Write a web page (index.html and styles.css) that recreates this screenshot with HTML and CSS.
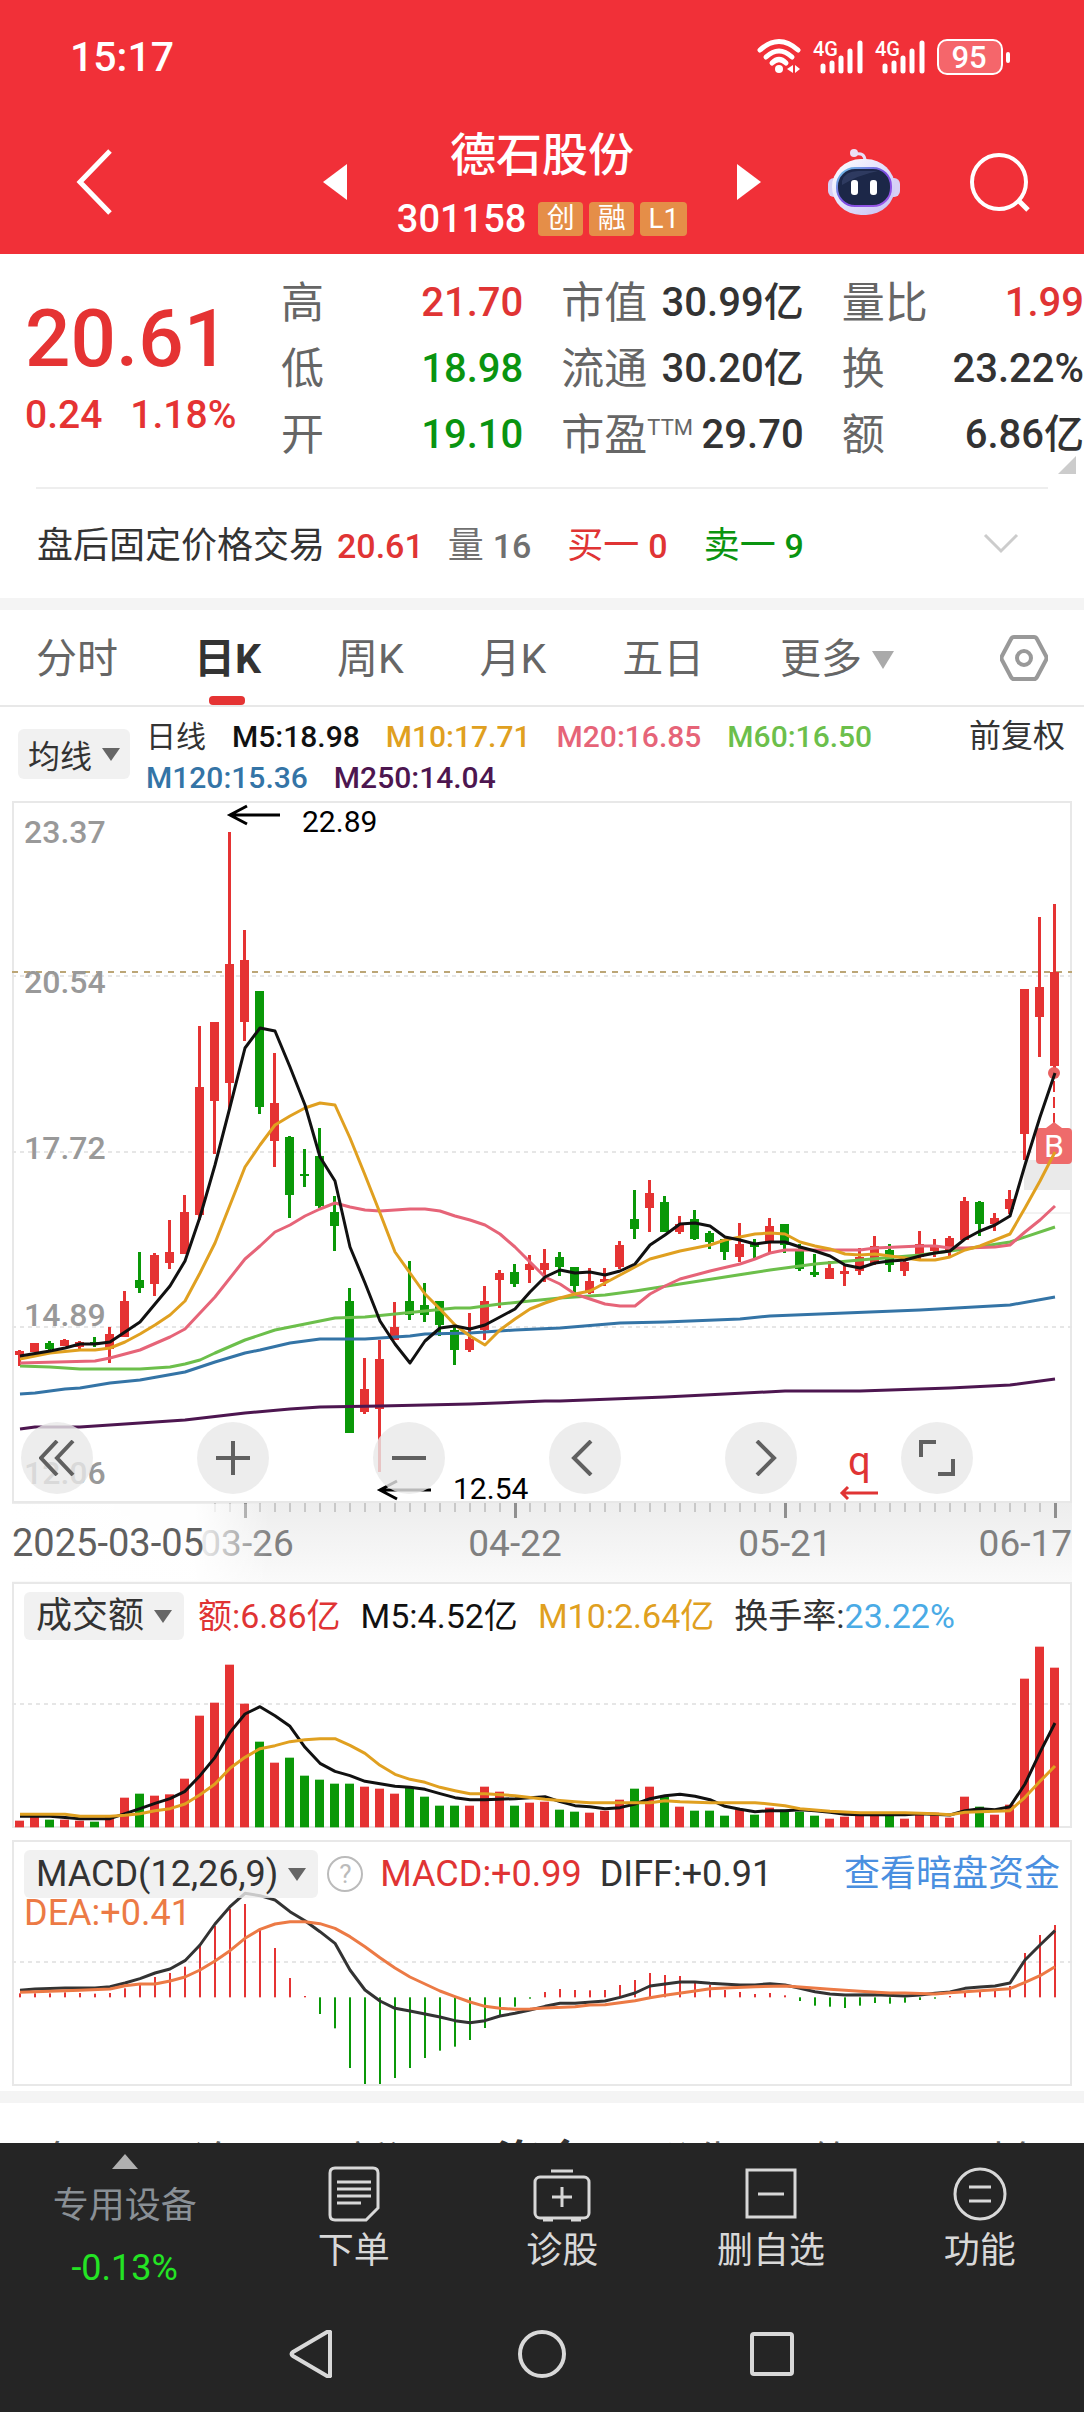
FILE: index.html
```html
<!DOCTYPE html>
<html lang="zh-CN">
<head>
  <meta charset="UTF-8" />
  <meta name="viewport" content="width=device-width, initial-scale=1" />
  <title>德石股份 301158</title>
  <link rel="stylesheet" href="styles.css">
</head>
<body>

  <header class="header">
    <div class="status-bar">
      <span class="clock">15:17</span>
      <div class="status-icons">
        <svg width="44" height="36" viewBox="0 0 44 36" fill="none" stroke="#fff" stroke-width="5" stroke-linecap="round">
          <path d="M3 11 Q22 -6 41 11" />
          <path d="M9 18 Q22 6 35 18" />
          <path d="M15 24 Q22 17 29 24" />
          <circle cx="22" cy="30" r="4" fill="#fff" stroke="none" />
          <path d="M30 30 l6 -4 v8z M43 30 l-5 -4 v8z" fill="#fff" stroke="none" />
        </svg>
        <svg class="signal" width="50" height="36" viewBox="0 0 50 36" stroke="#fff" stroke-width="5" stroke-linecap="round">
          <text x="0" y="17">4G</text>
          <path d="M10 27V32M19 24V32M28 19V32M37 12V32M47 4V32" />
        </svg>
        <svg class="signal" width="50" height="36" viewBox="0 0 50 36" stroke="#fff" stroke-width="5" stroke-linecap="round">
          <text x="0" y="17">4G</text>
          <path d="M10 27V32M19 24V32M28 19V32M37 12V32M47 4V32" />
        </svg>
        <svg class="battery" width="73" height="36" viewBox="0 0 73 36">
          <rect x="1" y="1" width="64" height="34" rx="9" fill="#f5666b" stroke="#fff" stroke-width="2" />
          <rect x="69" y="13" width="4" height="11" rx="2" fill="#fff" />
          <text x="32" y="29">95</text>
        </svg>
      </div>
    </div>

    <div class="title-bar">
      <button class="icon-btn back" aria-label="返回">
        <svg width="38" height="66" viewBox="0 0 38 66"><path d="M34 2 L4 33 L34 64" fill="none" stroke="#fff" stroke-width="5" /></svg>
      </button>
      <div class="stock-nav">
        <button class="icon-btn" aria-label="上一只">
          <svg width="24" height="36" viewBox="0 0 24 36"><path d="M24 0V36L0 18z" fill="#fff" /></svg>
        </button>
        <div class="stock-title">
          <h1>德石股份</h1>
          <div class="stock-code">301158 <span class="badge">创</span><span class="badge">融</span><span class="badge">L1</span></div>
        </div>
        <button class="icon-btn" aria-label="下一只">
          <svg width="24" height="36" viewBox="0 0 24 36"><path d="M0 0V36L24 18z" fill="#fff" /></svg>
        </button>
      </div>
      <div class="title-actions">
        <button class="icon-btn" aria-label="智能助手">
          <svg width="72" height="66" viewBox="0 0 72 66">
            <defs>
              <linearGradient id="shell" x1="0" y1="0" x2="1" y2="1">
                <stop offset="0" stop-color="#fff" />
                <stop offset="0.6" stop-color="#dcd9fa" />
                <stop offset="1" stop-color="#c4bdf2" />
              </linearGradient>
              <linearGradient id="rim" x1="0" y1="0" x2="1" y2="1">
                <stop offset="0" stop-color="#6fd0e8" />
                <stop offset="0.5" stop-color="#7a4be0" />
                <stop offset="1" stop-color="#a05ae8" />
              </linearGradient>
            </defs>
            <path d="M27 5 Q37 3 37 12" fill="none" stroke="#e6e0fa" stroke-width="3" />
            <circle cx="26" cy="4" r="4" fill="#ecdff5" />
            <rect x="0" y="29" width="72" height="19" rx="6" fill="#d6d0f6" />
            <rect x="4" y="10" width="63" height="56" rx="29" fill="url(#shell)" />
            <rect x="9" y="19" width="54" height="38" rx="18" fill="#1c2748" stroke="url(#rim)" stroke-width="2" />
            <path d="M14 32 Q17 22 30 22 L50 22 Q30 26 14 36z" fill="#36436b" opacity="0.7" />
            <rect x="23" y="31" width="7" height="15" rx="3" fill="#fff" />
            <rect x="42" y="31" width="7" height="15" rx="3" fill="#fff" />
          </svg>
        </button>
        <button class="icon-btn" aria-label="搜索">
          <svg width="60" height="60" viewBox="0 0 60 60" fill="none" stroke="#fff" stroke-width="4">
            <circle cx="29" cy="30" r="27" />
            <path d="M48 48 L58 58" stroke-width="5" />
          </svg>
        </button>
      </div>
    </div>
  </header>

  <main>
    <section class="quote">
      <div class="price">
        <div class="last">20.61</div>
        <div class="change"><span>0.24</span><span>1.18%</span></div>
      </div>
      <dl class="stats">
        <div><dt>高</dt><dd class="up">21.70</dd></div>
        <div><dt>市值</dt><dd>30.99亿</dd></div>
        <div><dt>量比</dt><dd class="up">1.99</dd></div>
        <div><dt>低</dt><dd class="down">18.98</dd></div>
        <div><dt>流通</dt><dd>30.20亿</dd></div>
        <div><dt>换</dt><dd>23.22%</dd></div>
        <div><dt>开</dt><dd class="down">19.10</dd></div>
        <div><dt>市盈<sup>TTM</sup></dt><dd>29.70</dd></div>
        <div><dt>额</dt><dd>6.86亿</dd></div>
      </dl>
      <span class="corner"></span>
    </section>

    <section class="after-hours">
      <span>盘后固定价格交易</span>
      <span class="num up">20.61</span>
      <span class="muted volume">量 <span class="num">16</span></span>
      <span class="up side">买一 <span class="num">0</span></span>
      <span class="down side">卖一 <span class="num">9</span></span>
      <button class="icon-btn expand" aria-label="展开">
        <svg width="36" height="22" viewBox="0 0 36 22"><path d="M2 2 L18 18 L34 2" fill="none" stroke="#ccc" stroke-width="3" /></svg>
      </button>
    </section>

    <nav class="tabs">
      <button class="tab">分时</button>
      <button class="tab active">日K</button>
      <button class="tab">周K</button>
      <button class="tab">月K</button>
      <button class="tab">五日</button>
      <button class="tab more">更多<span class="caret"></span></button>
      <button class="icon-btn settings" aria-label="设置">
        <svg width="48" height="46" viewBox="0 0 48 46" fill="none" stroke="#999" stroke-width="4">
          <path d="M14 2 H34 Q36 2 37 4 L46 21 Q47 23 46 25 L37 42 Q36 44 34 44 H14 Q12 44 11 42 L2 25 Q1 23 2 21 L11 4 Q12 2 14 2z" />
          <circle cx="24" cy="23" r="7" />
        </svg>
      </button>
    </nav>

    <section class="averages">
      <button class="picker">均线<span class="caret"></span></button>
      <div class="legend">
        <span class="period">日线</span>
        <span class="m5">M5:18.98</span>
        <span class="m10">M10:17.71</span>
        <span class="m20">M20:16.85</span>
        <span class="m60">M60:16.50</span>
        <span class="m120">M120:15.36</span>
        <span class="m250">M250:14.04</span>
      </div>
      <a class="adjust" href="#adjust">前复权</a>
    </section>

    <section class="kline">
      <svg id="kline" viewBox="0 0 1060 781" role="img" aria-label="日K线图">
        <defs>
          <linearGradient id="axis-v" x1="0" y1="0" x2="0" y2="1">
            <stop offset="0" stop-color="#ededed" />
            <stop offset="1" stop-color="#fafafa" />
          </linearGradient>
          <linearGradient id="axis-h" x1="0" y1="0" x2="1" y2="0">
            <stop offset="0" stop-color="#fff" />
            <stop offset="0.72" stop-color="#fff" stop-opacity="0.95" />
            <stop offset="1" stop-color="#fff" stop-opacity="0" />
          </linearGradient>
        </defs>
        <rect x="0" y="701" width="1060" height="80" fill="url(#axis-v)" />
        <rect x="1" y="1" width="1058" height="700" fill="#fff" stroke="#e8e8e8" stroke-width="2" />
        <path class="grid-line" d="M0 175H1060M0 351H1060M0 526H1060" />
        <path d="M0 171H1060" stroke="#bca676" stroke-width="2" stroke-dasharray="6 6" />
        <rect x="1012" y="359" width="48" height="30" fill="#eaeaea" />
        <path d="M1012 412H1060" stroke="#e6e6e6" />
        <g class="scale">
          <text x="12" y="42">23.37</text>
          <text x="12" y="192">20.54</text>
          <text x="12" y="358">17.72</text>
          <text x="12" y="525">14.89</text>
          <text x="12" y="683">12.06</text>
        </g>
        <g id="candles"></g>
        <path d="M1042 280V324" stroke="#e53333" stroke-width="2" stroke-dasharray="11 5" />
        <circle cx="1042" cy="272" r="6" fill="#e96060" />
        <path d="M1028 327H1034L1042 321L1050 327H1056Q1060 327 1060 331V359Q1060 363 1056 363H1028Q1024 363 1024 359V331Q1024 327 1028 327z" fill="#ee6b6b" />
        <text class="buy" x="1042" y="356">B</text>
        <g id="averages"></g>
        <g class="marks">
          <path d="M235 5L218 14L235 23M218 14H268" />
          <text x="290" y="31">22.89</text>
          <path d="M385 680L368 689L385 698M368 689H419" />
          <text x="441" y="698">12.54</text>
        </g>
        <g class="marker-q">
          <text x="836" y="674">q</text>
          <path d="M836 686L830 692L836 698M830 692H866" />
        </g>
        <g id="ticks"></g>
        <g class="dates">
          <text x="235" y="755" text-anchor="middle">03-26</text>
          <text x="503" y="755" text-anchor="middle">04-22</text>
          <text x="773" y="755" text-anchor="middle">05-21</text>
          <text x="1060" y="755" text-anchor="end">06-17</text>
          <rect x="-12" y="703" width="270" height="77" fill="url(#axis-h)" />
          <text class="first" x="0" y="755">2025-03-05</text>
        </g>
      </svg>
      <div class="chart-tools">
        <button aria-label="快退"><svg width="36" height="36" viewBox="0 0 36 36"><path d="M18 1L2 18L18 35M34 1L18 18L34 35" /></svg></button>
        <button aria-label="放大"><svg width="36" height="36" viewBox="0 0 36 36"><path d="M18 1V35M1 18H35" /></svg></button>
        <button aria-label="缩小"><svg width="36" height="36" viewBox="0 0 36 36"><path d="M1 18H35" /></svg></button>
        <button aria-label="左移"><svg width="36" height="36" viewBox="0 0 36 36"><path d="M24 1L7 18L24 35" /></svg></button>
        <button aria-label="右移"><svg width="36" height="36" viewBox="0 0 36 36"><path d="M14 1L31 18L14 35" /></svg></button>
        <button aria-label="全屏"><svg width="36" height="36" viewBox="0 0 36 36"><path d="M2 17V2H17M34 19V34H19" /></svg></button>
      </div>
    </section>

    <section class="panel">
      <svg id="volume" viewBox="0 0 1060 246" role="img" aria-label="成交额">
        <path class="grid-line" d="M0 122H1060" />
      </svg>
      <div class="panel-head">
        <button class="picker">成交额<span class="caret"></span></button>
        <div class="legend wide">
          <span class="up">额:6.86亿</span>
          <span class="m5">M5:4.52亿</span>
          <span class="m10">M10:2.64亿</span>
          <span>换手率:<span class="rate">23.22%</span></span>
        </div>
      </div>
    </section>

    <section class="panel">
      <svg id="macd" viewBox="0 0 1060 246" role="img" aria-label="MACD">
        <path class="grid-line" d="M0 122H1060" />
      </svg>
      <div class="panel-head">
        <button class="picker">MACD(12,26,9)<span class="caret"></span></button>
        <button class="icon-btn help" aria-label="帮助">?</button>
        <div class="legend tight">
          <span class="up">MACD:+0.99</span>
          <span>DIFF:+0.91</span>
        </div>
        <a class="dark-pool" href="#funds">查看暗盘资金</a>
        <span class="dea">DEA:+0.41</span>
      </div>
    </section>

    <nav class="info-tabs">
      <a href="#pankou">盘口</a>
      <a href="#forum">论股</a>
      <a href="#news">新闻</a>
      <a href="#capital" class="active">资金</a>
      <a href="#notice">公告</a>
      <a href="#profile">简况</a>
      <a href="#finance">财务</a>
    </nav>
  </main>

  <footer class="footer">
    <nav class="toolbar">
      <button class="sector">
        <span class="caret-up"></span>
        <span class="sector-name">专用设备</span>
        <span class="sector-change">-0.13%</span>
      </button>
      <button>
        <svg width="58" height="56" viewBox="0 0 58 56">
          <path d="M10 2H48Q53 2 53 7V42L41 54H10Q5 54 5 49V7Q5 2 10 2z" />
          <path d="M12 16H46M12 23H46M12 30H46M12 37H36" />
        </svg>
        下单
      </button>
      <button>
        <svg width="58" height="56" viewBox="0 0 58 56">
          <rect x="2" y="11" width="54" height="41" rx="5" />
          <path d="M18 5H40M29 21V41M19 31H39M10 54H20M38 54H48" />
        </svg>
        诊股
      </button>
      <button>
        <svg width="58" height="56" viewBox="0 0 58 56">
          <rect x="5" y="4" width="48" height="47" />
          <path d="M16 28H42" />
        </svg>
        删自选
      </button>
      <button>
        <svg width="58" height="56" viewBox="0 0 58 56">
          <circle cx="29" cy="28" r="25" />
          <path d="M18 21H40M18 35H40" />
        </svg>
        功能
      </button>
    </nav>
    <div class="system-nav">
      <button class="icon-btn" aria-label="后退"><svg width="48" height="48" viewBox="0 0 48 48"><path d="M42 2V46Q41 47 39 46L5 26Q2 24 5 22L39 2Q41 1 42 2z" /></svg></button>
      <button class="icon-btn" aria-label="主页"><svg width="48" height="48" viewBox="0 0 48 48"><circle cx="24" cy="24" r="22" /></svg></button>
      <button class="icon-btn" aria-label="最近任务"><svg width="48" height="48" viewBox="0 0 48 48"><rect x="4" y="4" width="40" height="40" rx="2" /></svg></button>
    </div>
  </footer>

  <script src="chart.js"></script>
</body>
</html>
```

FILE: styles.css
```css
* {
  box-sizing: border-box;
}

body {
  margin: 0;
  background: #fff;
  color: #333;
  font-family: Roboto, 'Noto Sans CJK SC', sans-serif;
  font-size: 36px;
}

button {
  margin: 0;
  padding: 0;
  border: none;
  background: none;
  color: inherit;
  font: inherit;
  cursor: pointer;
}

a {
  color: inherit;
  text-decoration: none;
}

svg {
  display: block;
}

.icon-btn {
  flex: none;
  line-height: 0;
}

.up {
  color: #e03434;
}

.down {
  color: #0a9410;
}

.muted {
  color: #707070;
}

.caret {
  display: inline-block;
  border: 9px solid transparent;
  border-top: 13px solid #666;
  border-bottom: none;
}

/* Header */
.header {
  background: #f13038;
  color: #fff;
}

.status-bar {
  display: flex;
  justify-content: space-between;
  align-items: center;
  height: 113px;
  padding: 0 74px 0 70px;
}

.clock {
  font-size: 41px;
  font-weight: 500;
}

.status-icons {
  display: flex;
  gap: 12px;
}

.status-icons svg {
  overflow: visible;
}

.signal text {
  fill: #fff;
  stroke: none;
  font-size: 20px;
  font-weight: 500;
}

.battery text {
  fill: #fff;
  font-size: 31px;
  font-weight: 500;
  text-anchor: middle;
}

.title-bar {
  display: grid;
  grid-template-columns: 1fr 438px 1fr;
  align-items: center;
  height: 141px;
  padding-bottom: 8px;
}

.back {
  justify-self: start;
  margin-left: 76px;
}

.stock-nav {
  display: flex;
  justify-content: space-between;
  align-items: center;
}

.stock-title {
  padding-top: 10px;
  text-align: center;
}

.stock-title h1 {
  margin: 0;
  font-size: 46px;
  font-weight: 500;
  line-height: 64px;
}

.stock-code {
  display: flex;
  align-items: center;
  gap: 6px;
  font-size: 38px;
  font-weight: 500;
  line-height: 64px;
}

.badge {
  min-width: 45px;
  padding: 0 8px;
  border-radius: 4px;
  background: #e58e48;
  font-size: 28px;
  font-weight: 400;
  line-height: 34px;
  text-align: center;
}

.badge:first-of-type {
  margin-left: 6px;
}

.title-actions {
  display: flex;
  justify-content: flex-end;
  align-items: center;
  gap: 70px;
  padding-right: 54px;
}

/* Quote */
.quote {
  position: relative;
  display: flex;
  padding: 16px 0 21px 25px;
}

.quote::after {
  content: '';
  position: absolute;
  right: 36px;
  bottom: 0;
  left: 36px;
  height: 2px;
  background: #eee;
}

.price {
  flex: 0 0 256px;
  color: #e53333;
  font-weight: 500;
}

.last {
  padding-top: 20px;
  font-size: 80px;
  line-height: 98px;
}

.change {
  display: flex;
  gap: 28px;
  font-size: 39px;
  line-height: 54px;
}

.stats {
  flex: 1;
  display: grid;
  grid-template-columns: repeat(3, 1fr);
  column-gap: 38px;
  margin: 0;
}

.stats div {
  display: flex;
  justify-content: space-between;
  height: 66px;
  line-height: 66px;
  white-space: nowrap;
}

.stats dt {
  color: #666;
  font-size: 43px;
}

.stats dd {
  margin: 0;
  font-size: 40px;
  font-weight: 500;
}

.stats sup {
  font-size: 22px;
  line-height: 0;
}

.corner {
  position: absolute;
  right: 8px;
  bottom: 15px;
  border: solid transparent;
  border-width: 18px 0 0 18px;
  border-bottom: 18px solid #ccc;
  border-top: none;
}

.after-hours {
  display: flex;
  align-items: baseline;
  height: 121px;
  padding: 0 65px 0 37px;
  border-bottom: 12px solid #f4f4f4;
  line-height: 114px;
}

.after-hours .num {
  font-size: 34px;
  font-weight: 500;
}

.after-hours > .num {
  margin-left: 12px;
}

.volume {
  margin-left: 24px;
}

.side {
  margin-left: 36px;
}

.expand {
  align-self: center;
  margin-left: auto;
}

/* Period tabs */
.tabs {
  display: flex;
  align-items: center;
  justify-content: space-between;
  height: 97px;
  padding: 0 36px;
  border-bottom: 2px solid #e8e8e8;
}

.tab {
  position: relative;
  padding-top: 4px;
  color: #666;
  font-size: 41px;
  line-height: 91px;
}

.tab.active {
  color: #333;
  font-weight: 700;
}

.tab.active::after {
  content: '';
  position: absolute;
  bottom: 0;
  left: 50%;
  width: 36px;
  height: 9px;
  margin-left: -18px;
  border-radius: 4px;
  background: #e53333;
}

.tab.more {
  display: flex;
  align-items: center;
  gap: 10px;
}

.tab .caret {
  border-width: 18px 11px 0;
  border-top-color: #aaa;
}

.settings {
  margin-left: 30px;
}

/* Moving averages */
.averages {
  display: flex;
  align-items: flex-start;
  gap: 16px;
  padding: 9px 19px 3px 18px;
  font-size: 32px;
}

.picker {
  display: flex;
  align-items: center;
  gap: 10px;
  flex: none;
  height: 48px;
  padding: 0 12px;
  border-radius: 6px;
  background: rgba(238, 238, 238, 0.8);
  white-space: nowrap;
}

.averages .picker {
  margin-top: 13px;
  height: 50px;
  padding: 0 10px;
}

.legend {
  flex: 1;
  display: flex;
  flex-wrap: wrap;
  column-gap: 26px;
}

.averages .legend {
  font-size: 30px;
  font-weight: 500;
  line-height: 41px;
}

.legend .period {
  font-weight: 400;
}

.adjust {
  line-height: 41px;
}

.m5 {
  color: #111;
}

.m10 {
  color: #e0a020;
}

.m20 {
  color: #e66478;
}

.m60 {
  color: #6cbf4b;
}

.m120 {
  color: #3474a6;
}

.m250 {
  color: #4d1650;
}

/* K line chart */
.kline {
  position: relative;
  margin: 0 12px;
}

.kline > svg,
.panel > svg {
  width: 100%;
  height: auto;
  overflow: visible;
}

.grid-line {
  stroke: #e6e6e6;
  stroke-width: 2;
  stroke-dasharray: 4 4;
}

.scale text {
  fill: #999;
  font-size: 32px;
  font-weight: 500;
}

.buy {
  fill: #fff;
  font-size: 32px;
  text-anchor: middle;
}

.marks text {
  font-size: 30px;
  fill: #000;
}

.marks path {
  fill: none;
  stroke: #000;
  stroke-width: 3;
}

.marker-q text {
  fill: #e03434;
  font-size: 40px;
}

.marker-q path {
  fill: none;
  stroke: #e03434;
  stroke-width: 3;
}

.dates text {
  fill: #808080;
  font-size: 37px;
}

.dates .first {
  fill: #606060;
  font-size: 38px;
}

.chart-tools {
  position: absolute;
  top: 621px;
  right: 99px;
  left: 9px;
  display: flex;
  justify-content: space-between;
}

.chart-tools button {
  display: flex;
  justify-content: center;
  align-items: center;
  width: 72px;
  height: 72px;
  border-radius: 50%;
  background: rgba(232, 232, 232, 0.8);
}

.chart-tools path {
  fill: none;
  stroke: #606060;
  stroke-width: 4;
}

.line {
  fill: none;
  stroke: currentColor;
  stroke-width: 3;
  stroke-linejoin: round;
}

.rise {
  fill: #e53333;
}

.fall {
  fill: #0a9808;
}

/* Indicator panels */
.panel {
  display: grid;
  margin: 0 12px 12px;
  box-shadow: inset 0 0 0 2px #e8e8e8;
}

.panel > svg,
.panel-head {
  grid-area: 1 / 1;
}

.panel-head {
  display: flex;
  flex-wrap: wrap;
  align-content: flex-start;
  align-items: center;
  padding: 10px 12px 0;
}

.panel-head .picker {
  line-height: 46px;
}

.legend.wide {
  column-gap: 20px;
  margin-left: 14px;
  font-size: 34px;
  line-height: 44px;
}

.legend.tight {
  column-gap: 18px;
  margin-left: 17px;
}

.rate {
  color: #4aabe6;
}

.help {
  width: 36px;
  height: 36px;
  margin-left: 9px;
  border: 2px solid #bbb;
  border-radius: 50%;
  color: #bbb;
  font-size: 26px;
}

.dark-pool {
  color: #4a8fe0;
  line-height: 44px;
}

.dea {
  flex-basis: 100%;
  color: #ec7a45;
  line-height: 30px;
}

.dea-line {
  color: #ec7a45;
}

/* Info tabs, scrolled under the footer */
.info-tabs {
  display: flex;
  height: 52px;
  margin-top: -7px;
  padding-top: 30px;
  border-top: 12px solid #f4f4f4;
  color: #666;
  font-size: 40px;
  line-height: 58px;
  overflow: hidden;
}

.info-tabs a {
  flex: 1;
  text-align: center;
}

.info-tabs .active {
  color: #333;
  font-size: 46px;
  font-weight: 700;
}

/* Footer */
.footer {
  position: relative;
  background: #252525;
  color: #d8d8d8;
}

.toolbar {
  display: flex;
  height: 157px;
}

.toolbar button {
  flex: 1;
  display: flex;
  flex-direction: column;
  align-items: center;
  gap: 4px;
  padding-top: 23px;
  line-height: 50px;
}

.toolbar svg,
.system-nav svg {
  fill: none;
  stroke: #d8d8d8;
  stroke-width: 3;
}

.toolbar .sector {
  flex: 0 0 23%;
  gap: 12px;
  padding-top: 11px;
}

.caret-up {
  border: 13px solid transparent;
  border-top: none;
  border-bottom: 15px solid #b0b0b0;
}

.sector-name {
  color: #8a9096;
}

.sector-change {
  color: #24e424;
}

.system-nav {
  display: flex;
  justify-content: center;
  gap: 182px;
  padding: 30px 0 34px;
}

.system-nav svg {
  stroke-width: 4;
}
```

FILE: chart.js
```js
const NS = 'http://www.w3.org/2000/svg';
const STEP = 15;
const FIRST = 8;

// [high, body top, body bottom, low] in chart units, from the top edge
const candles = [
  [549,550,554,565], [542,542,551,551], [540,542,548,549], [538,539,545,545], [540,541,546,550],
  [536,541,543,546], [526,533,548,562], [490,500,536,536], [451,479,487,492], [452,454,483,495],
  [419,451,462,468], [394,411,453,453], [225,286,414,419], [221,221,300,353], [31,163,282,309],
  [129,159,221,240], [190,190,306,313], [252,302,340,366], [335,336,394,417], [348,373,375,386],
  [327,355,405,407], [395,411,425,450], [487,500,632,632], [557,588,611,613], [539,558,608,671],
  [501,526,539,539], [460,500,514,519], [482,504,514,521], [500,500,524,535], [526,529,549,564],
  [512,538,549,551], [485,500,529,539], [469,472,479,507], [463,471,483,486], [454,463,469,482],
  [448,462,469,481], [451,456,466,475], [466,466,485,492], [467,480,492,493], [467,478,481,485],
  [440,444,466,468], [389,418,428,438], [379,392,407,431], [395,401,431,431], [415,423,431,433],
  [409,418,438,439], [430,432,441,448], [438,438,451,459], [422,443,456,461], [438,443,446,459],
  [417,425,441,453], [423,423,444,452], [443,449,468,470], [453,471,474,476], [460,467,478,478],
  [464,470,473,485], [447,456,470,474], [435,445,462,464], [443,449,464,471], [456,461,470,475],
  [430,443,456,458], [438,446,450,456], [435,437,449,455], [396,400,439,439], [400,401,423,435],
  [412,417,423,430], [389,398,408,413], [188,188,333,359], [116,186,216,256], [103,171,265,272]
];
const falling = new Set([2, 5, 8, 16, 18, 19, 20, 21, 22, 26, 27, 28, 29, 33, 36, 37, 41, 43, 45, 46, 47, 49, 51, 52, 53, 58, 64]);

// "day,value" points of each average
const averages = {
  m250: '0,628 1,626 4,626 7,623 11,619 15,612 18,608 20,606 24,605 30,603 35,600 36,600 43,596 47,593 51,590 56,590 62,587 66,584 69,578',
  m120: '0,593 1,592 3,588 4,587 6,582 8,579 11,571 13,561 15,552 16,549 18,542 20,538 23,538 26,535 27,533 30,532 33,529 36,527 40,522 43,521 48,518 50,515 55,512 60,509 66,504 69,496',
  m60: '0,565 2,566 4,568 8,568 10,566 11,563 12,559 13,552 15,539 17,529 19,523 21,517 23,516 25,513 27,510 29,507 30,507 32,503 34,500 36,497 39,494 41,490 44,483 47,476 50,469 53,463 56,459 60,454 63,448 66,441 69,426',
  m20: '0,562 5,560 6,557 8,549 10,536 11,528 12,512 13,496 15,458 16,445 17,431 18,424 19,415 20,408 21,402 22,406 23,409 24,410 26,408 27,408 28,410 29,415 30,419 31,424 32,433 33,446 34,461 35,476 36,483 37,493 38,498 39,503 40,505 41,505 42,493 43,485 44,478 46,470 48,463 49,458 50,452 51,449 56,449 57,447 60,445 61,445 62,447 63,447 65,446 66,444 67,431 68,419 69,405',
  m10: '0,558 2,552 4,549 5,549 6,547 7,541 8,533 9,524 10,514 11,500 12,472 13,442 14,404 15,366 16,344 17,324 18,315 19,307 20,302 21,304 22,337 23,374 24,412 25,451 26,472 27,493 28,508 29,524 30,535 31,544 32,529 33,518 34,508 35,502 36,497 37,493 38,490 39,482 40,474 41,466 42,458 43,454 44,450 45,447 46,444 47,439 48,436 49,433 50,432 51,433 52,441 53,445 54,448 55,453 56,454 57,453 58,455 59,457 60,459 61,459 62,456 63,449 64,445 65,439 66,433 67,407 68,380 69,351',
  m5: '0,555 2,550 3,547 4,543 5,543 6,541 7,531 8,521 9,503 10,485 11,460 12,416 13,364 14,306 15,247 16,227 17,230 18,266 19,304 20,356 21,380 22,446 23,482 24,520 25,543 26,562 27,540 28,527 29,525 30,528 31,524 32,516 33,508 34,491 35,476 36,469 37,472 38,471 39,474 40,470 41,463 42,444 43,434 44,423 45,422 46,425 47,436 48,439 49,443 50,441 51,441 52,446 53,450 54,455 55,464 56,467 57,462 58,460 59,459 60,455 61,452 62,450 63,438 64,430 65,424 66,415 67,364 68,316 69,272'
};

// Indicator values are kept at three units per pixel of panel height
const volume = {
  base: 736,
  bars: [20,32,23,23,20,17,35,89,101,95,99,146,335,374,488,371,257,194,209,155,143,131,131,122,116,101,119,92,65,65,65,122,107,65,74,77,53,47,44,50,83,116,122,92,62,50,50,35,53,38,59,53,47,35,26,32,35,35,38,26,41,44,29,92,62,38,68,446,542,479],
  m5: '0,33 2,33 4,26 6,26 7,41 8,56 9,72 10,86 11,108 12,155 13,210 14,285 15,340 16,362 17,335 18,303 19,240 20,192 21,168 22,155 23,138 24,131 25,123 26,120 27,114 28,101 29,89 30,83 31,83 33,86 34,89 35,92 36,77 37,65 38,62 39,56 40,59 41,70 42,86 43,95 44,99 45,93 46,83 47,63 48,54 49,47 50,50 51,50 52,53 53,50 54,45 55,39 56,38 59,38 60,41 62,37 63,50 64,56 65,53 66,62 67,130 68,225 69,313',
  m10: '0,39 3,39 4,33 6,33 7,36 8,41 9,50 10,56 11,70 12,98 13,130 14,177 15,210 16,236 17,245 18,257 19,263 20,266 21,266 22,246 23,222 24,186 25,159 26,144 27,135 28,120 29,110 30,101 31,101 33,95 35,84 37,77 38,74 42,74 43,80 44,77 46,74 49,74 51,65 52,56 54,48 56,44 59,44 61,41 62,38 63,45 65,48 66,50 67,90 68,138 69,184'
};

const macd = {
  base: 472,
  bars: [12,12,12,15,13,11,13,27,42,61,73,92,154,214,265,280,205,148,58,4,-50,-93,-212,-260,-260,-242,-212,-182,-160,-148,-128,-92,-53,-28,-4,16,25,22,21,22,37,52,73,67,64,46,37,22,16,10,13,6,-11,-25,-28,-32,-25,-17,-19,-16,-8,-4,4,16,22,25,34,133,187,217],
  diff: '0,21 1,25 3,28 5,28 6,32 7,43 8,56 9,73 10,85 11,110 12,157 13,220 14,272 15,312 16,305 17,292 18,257 19,230 20,197 21,162 22,82 23,22 24,-11 25,-33 26,-41 27,-50 28,-59 29,-70 30,-76 31,-70 32,-56 33,-48 34,-38 35,-27 36,-18 37,-18 39,-11 40,0 41,13 42,34 43,40 44,46 45,46 46,42 48,37 49,37 50,41 51,37 52,27 53,17 54,10 55,7 57,8 59,4 60,7 61,12 62,16 63,27 64,31 65,34 66,43 67,112 68,157 69,200',
  dea: '0,15 2,18 4,21 6,25 7,35 8,40 9,40 10,49 11,61 12,82 13,109 14,140 15,177 16,204 17,220 18,227 19,227 20,221 21,207 22,182 23,152 24,119 25,88 26,61 27,40 28,19 29,2 30,-14 31,-27 32,-33 33,-36 34,-35 35,-32 37,-28 38,-23 39,-22 40,-16 41,-10 42,-1 43,6 45,19 46,26 47,28 49,32 51,34 52,31 54,24 56,18 58,13 59,13 61,10 62,14 64,20 66,26 67,45 68,65 69,92'
};

function add(parent, name, attrs) {
  const el = document.createElementNS(NS, name);
  for (const key in attrs) el.setAttribute(key, attrs[key]);
  parent.appendChild(el);
}

const dayX = (day) => FIRST + day * STEP;

function addLine(parent, className, data, toY) {
  const points = data.split(' ').map((pair) => {
    const [day, value] = pair.split(',').map(Number);
    return `${dayX(day)},${toY(value)}`;
  });
  add(parent, 'polyline', { class: `line ${className}`, points: points.join(' ') });
}

// Candles
const candleGroup = document.getElementById('candles');
candles.forEach(([high, top, bottom, low], day) => {
  const color = falling.has(day) ? 'fall' : 'rise';
  add(candleGroup, 'rect', { class: color, x: dayX(day) - 2, y: high, width: 3, height: low - high });
  add(candleGroup, 'rect', { class: color, x: dayX(day) - 5, y: top, width: 9, height: bottom - top });
});

const averageGroup = document.getElementById('averages');
for (const name in averages) {
  addLine(averageGroup, name, averages[name], (v) => v);
}

// Axis ticks, a longer one at each labelled day
const tickGroup = document.getElementById('ticks');
for (let day = 13; day < 70; day++) {
  const major = [15, 33, 51, 69].includes(day);
  add(tickGroup, 'rect', {
    x: dayX(day) - 1, y: 702, width: major ? 3 : 2, height: major ? 15 : 9,
    fill: major ? '#909090' : '#c8c8c8'
  });
}

// Turnover
const volumeSvg = document.getElementById('volume');
const volumeY = (v) => (volume.base - v) / 3;
volume.bars.forEach((v, day) => {
  add(volumeSvg, 'rect', {
    class: falling.has(day) ? 'fall' : 'rise',
    x: dayX(day) - 5, y: volumeY(v), width: 9, height: v / 3
  });
});
addLine(volumeSvg, 'm5', volume.m5, volumeY);
addLine(volumeSvg, 'm10', volume.m10, volumeY);

// MACD
const macdSvg = document.getElementById('macd');
const macdY = (v) => (macd.base - v) / 3;
macd.bars.forEach((v, day) => {
  add(macdSvg, 'rect', {
    class: v < 0 ? 'fall' : 'rise',
    x: dayX(day) - 1, y: macdY(Math.max(v, 0)), width: 2, height: Math.abs(v) / 3
  });
});
addLine(macdSvg, 'diff-line', macd.diff, macdY);
addLine(macdSvg, 'dea-line', macd.dea, macdY);
```
